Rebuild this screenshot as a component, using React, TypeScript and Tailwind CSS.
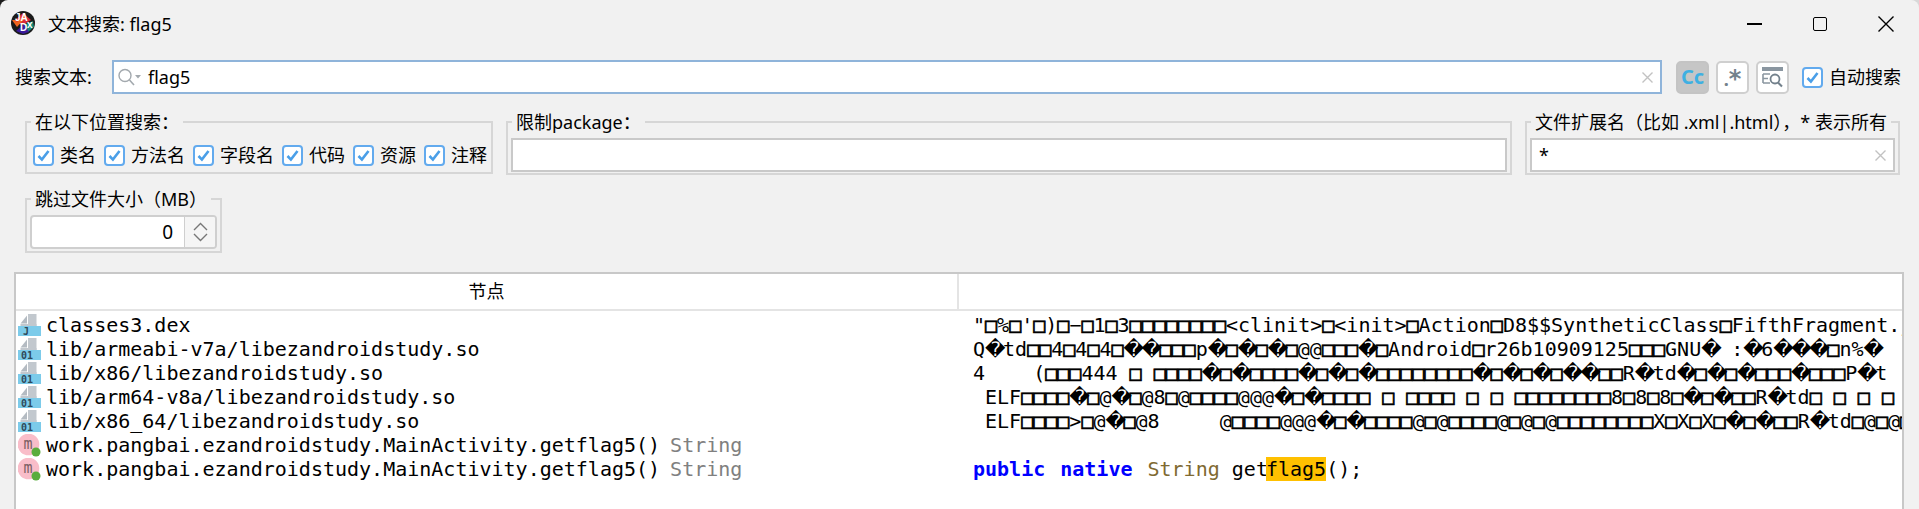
import type { ReactNode } from "react";

const uiFont = "font-['Noto_Sans','Noto_Sans_CJK_SC',sans-serif]";

// tofu boxes and � come out heavier / wider than the mono cell in the result pane
const Garbled = ({ text }: { text: string }) => (
  <>
    {text.split(/(�|□+)/).map((part, i) =>
      part === "�" ? (
        <span key={i} className="inline-block w-[18px] text-center font-['DejaVu_Sans',sans-serif]">
          �
        </span>
      ) : part.startsWith("□") ? (
        <span key={i} className="[-webkit-text-stroke:0.7px_black]">
          {part}
        </span>
      ) : (
        <span key={i}>{part}</span>
      )
    )}
  </>
);

const Check = ({ label, gap = "mr-[8px]" }: { label?: string; gap?: string }) => (
  <div className={`flex items-center ${gap}`}>
    <div className="flex h-[21px] w-[21px] items-center justify-center rounded-[4px] border-2 border-[#62aaee] bg-white">
      <svg width="15" height="15" viewBox="0 0 15 15" fill="none">
        <path d="M2.5 8l3.4 3.6L12.5 3" stroke="#4a9fe8" strokeWidth="2.6" />
      </svg>
    </div>
    {label && <span className="ml-[6px] text-[18px] leading-[24px] text-black">{label}</span>}
  </div>
);

const ClearIcon = () => (
  <svg width="11" height="11" viewBox="0 0 11 11" className="shrink-0">
    <path d="M0.5 0.5l10 10M10.5 0.5l-10 10" stroke="#c2c2c2" strokeWidth="1.4" />
  </svg>
);

const Group = ({
  title,
  className,
  children,
}: {
  title: string;
  className: string;
  children: ReactNode;
}) => (
  <fieldset className={`min-w-0 border-2 border-[#d6d6d6] px-[3px] pb-[2px] pt-[2px] ${className}`}>
    <legend className="ml-[1px] px-[4px] text-[18px] leading-[24px] text-black whitespace-nowrap">
      {title}
    </legend>
    {children}
  </fieldset>
);

const ToolButton = ({ active, children }: { active?: boolean; children: ReactNode }) => (
  <div
    className={`flex h-[33px] w-[33px] items-center justify-center rounded-[5px] border-2 ${
      active ? "border-[#c4c4c4] bg-[#c6c6c6]" : "border-[#cfcfcf] bg-white"
    }`}
  >
    {children}
  </div>
);

const FileIcon = ({ tag }: { tag: string }) => (
  <svg width="23" height="23" viewBox="0 0 23 23" className="shrink-0">
    <rect x="10" y="0" width="8.5" height="12" fill="#c2c8ce" />
    <path d="M2.5 9.5L9 1.5v8z" fill="#b4bbc2" />
    <rect x="2.5" y="10" width="16" height="2" fill="#c2c8ce" />
    <rect x="0" y="12" width="23" height="10" fill="#7ccbea" />
    <text x={tag === "J" ? 5 : 3} y="21" fontSize="10" fontWeight="700" fontFamily="'DejaVu Sans Mono',monospace" fill="#2f4a5a">
      {tag}
    </text>
  </svg>
);

const MethodIcon = () => (
  <svg width="23" height="23" viewBox="0 0 23 23" className="shrink-0">
    <circle cx="10.5" cy="10.5" r="10.8" fill="#f9bdc9" />
    <text x="5.5" y="15" fontSize="15" fontFamily="'DejaVu Sans Mono',monospace" fill="#7d5f64">
      m
    </text>
    <circle cx="18" cy="18" r="4.5" fill="#59ad3c" />
  </svg>
);

const rows: { icon: ReactNode; name: string; type?: string; code: string }[] = [
  {
    icon: <FileIcon tag="J" />,
    name: "classes3.dex",
    code: "\"□%□'□)□−□1□3□□□□□□□□<clinit>□<init>□Action□D8$$SyntheticClass□FifthFragment.j",
  },
  {
    icon: <FileIcon tag="01" />,
    name: "lib/armeabi-v7a/libezandroidstudy.so",
    code: "Q�td□□4□4□4□��□□□p�□�□�□@@□□□�□Android□r26b10909125□□□GNU� :�6���□n%�",
  },
  {
    icon: <FileIcon tag="01" />,
    name: "lib/x86/libezandroidstudy.so",
    code: "4    (□□□444 □ □□□□�□�□□□□�□�□�□□□□□□□□�□�□�□��□□R�td�□�□�□□□�□□□P�t",
  },
  {
    icon: <FileIcon tag="01" />,
    name: "lib/arm64-v8a/libezandroidstudy.so",
    code: " ELF□□□□�□@�□@8□@□□□□@@@�□�□□□□ □ □□□□ □ □ □□□□□□□□8□8□8□�□�□□R�td□ □ □ □",
  },
  {
    icon: <FileIcon tag="01" />,
    name: "lib/x86_64/libezandroidstudy.so",
    code: " ELF□□□□>□@�□@8     @□□□□@@@�□�□□□□@□@□□□□@□@□@□□□□□□□□X□X□X□�□�□□R�td□@□@□",
  },
  {
    icon: <MethodIcon />,
    name: "work.pangbai.ezandroidstudy.MainActivity.getflag5()",
    type: "String",
    code: "",
  },
  {
    icon: <MethodIcon />,
    name: "work.pangbai.ezandroidstudy.MainActivity.getflag5()",
    type: "String",
    code: "",
  },
];

export default function App() {
  return (
    <div className="h-[509px] w-[1919px] overflow-hidden bg-[linear-gradient(90deg,#1c1c1c_50%,#d8d8d8_50%)]">
      <div className={`flex h-full flex-col rounded-t-[8px] bg-[#f1f1f1] ${uiFont}`}>
        {/* title bar */}
        <div className="flex h-[48px] shrink-0 items-center">
          <svg width="24" height="24" viewBox="0 0 24 24" className="ml-[11px] mt-[-2px] shrink-0">
            <circle cx="12" cy="12" r="12" fill="#1a1a1a" />
            <path d="M2 11L12 2l8 7-8 5z" fill="#d92c3a" />
            <path d="M1 9l5 7L15 6l-2-2-7 7-2-2z" fill="#f0641e" />
            <path d="M12 14l10-4 1 6-6 5z" fill="#128a78" />
            <path d="M5 20l8-7 5 8-6 2z" fill="#3a1a9a" />
            <text x="4" y="10" fontSize="10" fontWeight="700" fill="#fff" fontFamily="'Liberation Sans',sans-serif">JA</text>
            <text x="9" y="20" fontSize="10" fontWeight="700" fill="#fff" fontFamily="'Liberation Sans',sans-serif">D</text>
            <text x="16" y="17" fontSize="10" fontWeight="700" fill="#fff" fontFamily="'Liberation Sans',sans-serif">x</text>
          </svg>
          <span className="ml-[13px] text-[18px] text-black">文本搜索: flag5</span>
          <div className="ml-auto flex">
            <div className="flex h-[48px] w-[66px] items-center justify-center">
              <div className="h-[1.5px] w-[15px] bg-black" />
            </div>
            <div className="flex h-[48px] w-[66px] items-center justify-center">
              <div className="h-[14px] w-[14px] rounded-[2px] border-[1.5px] border-black" />
            </div>
            <div className="flex h-[48px] w-[66px] items-center justify-center">
              <svg width="16" height="16" viewBox="0 0 16 16">
                <path d="M0.5 0.5l15 15M15.5 0.5l-15 15" stroke="#000" strokeWidth="1.4" />
              </svg>
            </div>
          </div>
        </div>

        {/* search row */}
        <div className="mt-[12px] flex h-[34px] shrink-0 items-center pl-[15px]">
          <span className="w-[97px] text-[18px] text-black">搜索文本:</span>
          <div className="flex h-[34px] w-[1550px] items-center border-2 border-[#8fb4da] bg-white pl-[3px] pr-[7px]">
            <svg width="25" height="19" viewBox="0 0 25 19" className="shrink-0">
              <circle cx="8" cy="7.5" r="6" fill="none" stroke="#a3a9ae" strokeWidth="1.4" />
              <path d="M12.5 12l4.5 5" stroke="#a3a9ae" strokeWidth="1.6" />
              <path d="M18 7h6l-3 3.5z" fill="#a3a9ae" />
            </svg>
            <span className="ml-[6px] text-[18px] text-black">flag5</span>
            <div className="ml-auto">
              <ClearIcon />
            </div>
          </div>
          <div className="ml-[14px] flex gap-[7px]">
            <ToolButton active>
              <span className="text-[20px] font-bold leading-none text-[#3fb0e2]">Cc</span>
            </ToolButton>
            <ToolButton>
              <span className="flex h-[26px] items-start font-bold leading-none text-[#73818c]">
                <span className="mt-[6px] text-[18px]">.</span>
                <span className="mt-[3px] text-[24px] font-['DejaVu_Sans',sans-serif]">*</span>
              </span>
            </ToolButton>
            <ToolButton>
              <svg width="23" height="23" viewBox="0 0 23 23" fill="none">
                <rect x="1" y="1" width="21" height="4" fill="#8a96a0" />
                <path d="M2 8h7M2 12.5h5M2 17h7M2 8v9" stroke="#8a96a0" strokeWidth="1.6" />
                <circle cx="14" cy="13" r="4.5" stroke="#73818c" strokeWidth="1.8" />
                <path d="M17 16.5l4 4" stroke="#73818c" strokeWidth="2" />
              </svg>
            </ToolButton>
          </div>
          <div className="ml-[13px]">
            <Check label="自动搜索" gap="" />
          </div>
        </div>

        {/* filter groups */}
        <div className="mt-[16px] flex h-[65px] shrink-0 pl-[25px]">
          <Group title="在以下位置搜索：" className="mb-[1px] w-[468px]">
            <div className="mt-[7px] flex pl-[3px]">
              <Check label="类名" />
              <Check label="方法名" />
              <Check label="字段名" />
              <Check label="代码" />
              <Check label="资源" />
              <Check label="注释" gap="" />
            </div>
          </Group>
          <Group title="限制package：" className="ml-[13px] w-[1006px]">
            <div className="mt-[2px] h-[34px] border-2 border-[#c9c9c9] bg-white" />
          </Group>
          <Group title="文件扩展名（比如 .xml|.html），* 表示所有" className="ml-[13px] w-[375px]">
            <div className="mt-[2px] flex h-[34px] items-center border-2 border-[#c9c9c9] bg-white pl-[7px] pr-[7px]">
              <span className="text-[18px] text-black">*</span>
              <div className="ml-auto">
                <ClearIcon />
              </div>
            </div>
          </Group>
        </div>

        <div className="mt-[12px] flex h-[66px] shrink-0 pl-[25px]">
          <Group title="跳过文件大小（MB）" className="w-[197px]">
            <div className="mt-[2px] flex h-[34px] overflow-hidden rounded-[4px] border-2 border-[#cfcfcf] bg-white">
              <div className="flex-1 pr-[11px] text-right text-[19px] leading-[31px] text-black">0</div>
              <div className="flex w-[31px] flex-col items-center justify-center gap-[2px] border-l border-[#cfcfcf] bg-[#f5f5f5]">
                <svg width="15" height="9" viewBox="0 0 15 9" fill="none">
                  <path d="M1 8l6.5-6.5L14 8" stroke="#777" strokeWidth="1.4" />
                </svg>
                <svg width="15" height="9" viewBox="0 0 15 9" fill="none">
                  <path d="M1 1l6.5 6.5L14 1" stroke="#777" strokeWidth="1.4" />
                </svg>
              </div>
            </div>
          </Group>
        </div>

        {/* results */}
        <div className="ml-[14px] mr-[15px] mt-[19px] flex min-h-0 flex-1 flex-col overflow-hidden border-x-2 border-t-2 border-[#c8c8c8] bg-white">
          <div className="flex h-[37px] shrink-0 border-b-2 border-[#e4e4e4]">
            <div className="flex w-[943px] items-center justify-center border-r-2 border-[#e4e4e4] text-[18px] text-black">
              节点
            </div>
            <div className="flex-1" />
          </div>
          <div className="font-['DejaVu_Sans_Mono',monospace] text-[20px] leading-[24px] pt-[2px]">
            {rows.map((row, i) => (
              <div key={i} className="flex h-[24px] whitespace-pre">
                <div className="flex w-[943px] shrink-0 items-center pl-[2px]">
                  {row.icon}
                  <span className="ml-[5px] text-black">{row.name}</span>
                  {row.type && <span className="ml-[10px] text-[#808080]">{row.type}</span>}
                </div>
                <div className="min-w-0 flex-1 overflow-hidden pl-[14px] text-black">
                  {i === 6 ? (
                    <>
                      <span className="font-bold text-[#0000ff]">public</span>
                      <span className="ml-[15px] font-bold text-[#0000ff]">native</span>
                      <span className="ml-[15px] text-[#7f6a32]">String</span> <span className="mr-[-2px]">get</span>
                      <span className="bg-[#ffc000]">flag5</span>();
                    </>
                  ) : (
                    <Garbled text={row.code} />
                  )}
                </div>
              </div>
            ))}
          </div>
        </div>
      </div>
    </div>
  );
}
